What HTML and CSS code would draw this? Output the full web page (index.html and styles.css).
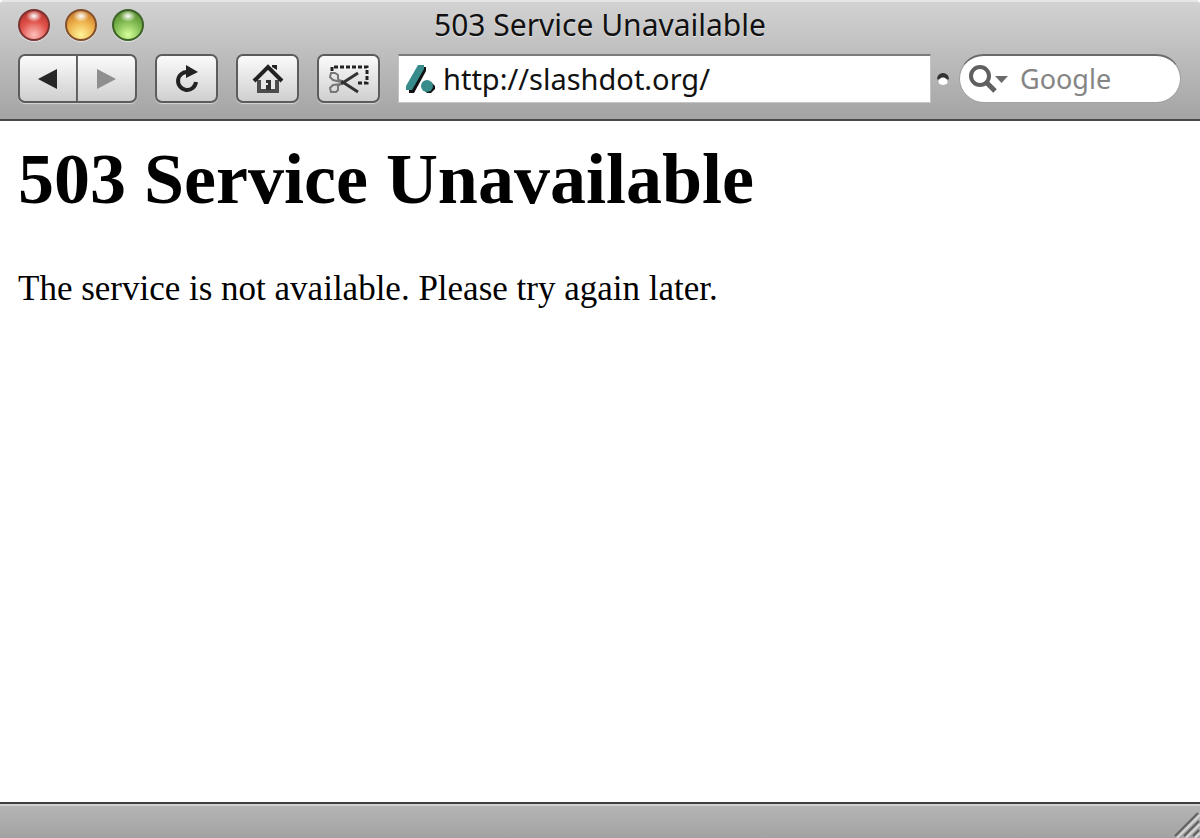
FILE: index.html
```html
<!DOCTYPE html>
<html lang="en">
<head>
<meta charset="UTF-8">
<meta name="viewport" content="width=device-width, initial-scale=1.0">
<title>503 Service Unavailable</title>
<link rel="stylesheet" href="styles.css">
</head>
<body>
  <header class="chrome">
    <div class="titlebar">
      <div class="lights">
        <button type="button" class="light red" aria-label="Close"></button>
        <button type="button" class="light yellow" aria-label="Minimize"></button>
        <button type="button" class="light green" aria-label="Zoom"></button>
      </div>
      <div class="window-title">503 Service Unavailable</div>
    </div>

    <form class="toolbar">
      <div class="nav-group">
        <button type="button" class="tool-btn" aria-label="Back">
          <svg width="20" height="22" viewBox="0 0 20 22"><path d="M0 11L19 1V21Z" fill="#262626"/></svg>
        </button>
        <button type="button" class="tool-btn" aria-label="Forward">
          <svg width="20" height="22" viewBox="0 0 20 22"><path d="M19 11L0 1V21Z" fill="#8e8e8e"/></svg>
        </button>
      </div>

      <button type="button" class="tool-btn" aria-label="Reload">
        <svg width="26" height="30" viewBox="0 0 26 30">
          <path d="M14 8A9 9 0 1 0 22 18" fill="none" stroke="#222" stroke-width="4"/>
          <path d="M12 1L24 8L12 14Z" fill="#222"/>
        </svg>
      </button>

      <button type="button" class="tool-btn" aria-label="Home">
        <svg width="32" height="30" viewBox="0 0 32 30">
          <path d="M7 16V27H25V16" fill="#e8e8e8" stroke="#4c4c4c" stroke-width="4"/>
          <path d="M20 1H25V6L20 3Z" fill="#222"/>
          <path d="M2 17L16 3L30 17" fill="none" stroke="#222" stroke-width="4"/>
          <path d="M14 16H19V26H14V21H16V19H14Z" fill="#333"/>
        </svg>
      </button>

      <button type="button" class="tool-btn" aria-label="Web clip">
        <svg width="40" height="30" viewBox="0 0 40 30">
          <path d="M3 7V3H38V19H27" fill="none" stroke="#222" stroke-width="3" stroke-dasharray="4 2"/>
          <path d="M12 17L29 28" stroke="#333" stroke-width="3"/>
          <path d="M12 20L29 9" stroke="#333" stroke-width="3"/>
          <path d="M12 17L9 15V11L6 9H2L1 13L4 16L12 18M12 20L4 21L1 24L2 28H7L9 26V22L12 20" fill="none" stroke="#777" stroke-width="2"/>
        </svg>
      </button>

      <label class="address">
        <svg width="30" height="30" viewBox="0 0 30 30" aria-hidden="true">
          <path d="M14 3H20V7L8 29H3V25Z" fill="#111"/>
          <path d="M12 1H18V5L6 26H0V22Z" fill="#378b8b"/>
          <path d="M20 18H25L29 22V25L25 29H21L18 26Z" fill="#111"/>
          <circle cx="21" cy="22" r="6" fill="#378b8b"/>
        </svg>
        <input type="text" value="http://slashdot.org/" aria-label="Address">
      </label>

      <span class="grip"></span>

      <label class="search">
        <svg width="40" height="30" viewBox="0 0 40 30" aria-hidden="true">
          <circle cx="12" cy="12" r="9" fill="none" stroke="#606060" stroke-width="4"/>
          <path d="M18 18L27 27" stroke="#606060" stroke-width="5"/>
          <path d="M27 12H40L33.500 19Z" fill="#6a6a6a"/>
        </svg>
        <input type="text" placeholder="Google" aria-label="Search">
      </label>
    </form>
  </header>

  <main class="page">
    <h1>503 Service Unavailable</h1>
    <p>The service is not available. Please try again later.</p>
  </main>

  <footer class="statusbar">
    <svg width="26" height="26" viewBox="0 0 26 26" aria-hidden="true">
      <path d="M3 26L26 3M12 26L26 12M21 26L26 21" stroke="#d6d6d6" stroke-width="2"/>
      <path d="M1 24L24 1M10 24L25 9M19 24L25 18" stroke="#606060" stroke-width="2"/>
    </svg>
  </footer>
</body>
</html>
```
FILE: styles.css
```css
* {
  box-sizing: border-box;
}

body {
  margin: 0;
  min-height: 100vh;
  display: flex;
  flex-direction: column;
  background-color: #fff;
  font-family: "Noto Sans", sans-serif;
}

.chrome {
  height: 121px;
  background: linear-gradient(#d2d2d2, #a4a4a4);
  border-top: 2px solid #e6e6e6;
  border-bottom: 2px solid #484848;
  border-radius: 4px 4px 0 0;
}

.titlebar {
  height: 46px;
  padding: 0 18px;
  display: grid;
  grid-template-columns: 1fr auto 1fr;
  align-items: center;
}

.lights {
  display: flex;
  gap: 15px;
}

.light {
  width: 32px;
  height: 32px;
  padding: 0;
  border: 2px solid;
  border-radius: 50%;
  box-shadow: 0 1px 1px #e4e4e4;
}

.light.red {
  background: radial-gradient(ellipse 8px 6px at 50% 18%, #fff, transparent), radial-gradient(circle at 50% 85%, #ffc0bc, #e0524a 50%, #a82622);
  border-color: #7a3330;
}

.light.yellow {
  background: radial-gradient(ellipse 8px 6px at 50% 18%, #fff, transparent), radial-gradient(circle at 50% 85%, #fff59a, #eeb04a 50%, #b5601c);
  border-color: #83502c;
}

.light.green {
  background: radial-gradient(ellipse 8px 6px at 50% 18%, #fff, transparent), radial-gradient(circle at 50% 85%, #d6ff9c, #80b950 50%, #417a1e);
  border-color: #3c6228;
}

.window-title {
  font-size: 30px;
  line-height: 40px;
  color: #111;
  text-shadow: 0 1px 1px #e4e4e4;
}

.toolbar {
  display: flex;
  align-items: center;
  gap: 18px;
  padding: 6px 19px 0 18px;
}

.nav-group {
  display: flex;
}

.tool-btn {
  width: 63px;
  height: 49px;
  padding: 0;
  display: flex;
  justify-content: center;
  align-items: center;
  background: linear-gradient(#fbfbfb, #cfcfcf);
  border: 2px solid #5c5c5c;
  border-radius: 7px;
  box-shadow: 0 1px 1px #d8d8d8;
}

.nav-group .tool-btn {
  width: 59px;
}

.nav-group .tool-btn:first-child {
  width: 60px;
  border-radius: 7px 0 0 7px;
}

.nav-group .tool-btn:last-child {
  border-left: 0;
  border-radius: 0 7px 7px 0;
}

.address {
  flex: 1;
  height: 49px;
  padding: 0 7px;
  display: flex;
  align-items: center;
  gap: 7px;
  background-color: #fff;
  border: 1px solid #c4c4c4;
  border-top: 2px solid #7c7c7c;
}

.address input,
.search input {
  flex: 1;
  min-width: 0;
  padding: 0;
  border: 0;
  outline: 0;
  background: transparent;
  font-family: inherit;
  font-size: 27px;
  line-height: 40px;
  color: #111;
}

.address input {
  font-size: 29px;
}

.grip {
  width: 12px;
  height: 12px;
  margin: 0 -8px 0 -12px;
  border-radius: 50%;
  background: radial-gradient(circle at 50% 75%, #fff 4px, transparent 5px), linear-gradient(#333 45%, #b0b0b0 60%);
}

.search {
  width: 222px;
  height: 49px;
  padding: 0 8px;
  display: flex;
  align-items: center;
  gap: 12px;
  background-color: #fff;
  border: 1px solid #a0a0a0;
  border-top: 2px solid #6a6a6a;
  border-radius: 25px;
}

.search input::placeholder {
  color: #858585;
  opacity: 1;
}

.page {
  flex: 1;
  padding: 18px;
  font-family: "Liberation Serif", serif;
  color: #000;
}

h1 {
  margin: 0 0 47px;
  font-size: 72px;
  line-height: 80px;
}

p {
  margin: 0;
  font-size: 35px;
  line-height: 46px;
}

.statusbar {
  height: 36px;
  display: flex;
  justify-content: flex-end;
  align-items: flex-end;
  background: linear-gradient(#b6b6b6, #a2a2a2);
  border-top: 2px solid #404040;
  box-shadow: inset 0 2px #d2d2d2;
}
```
